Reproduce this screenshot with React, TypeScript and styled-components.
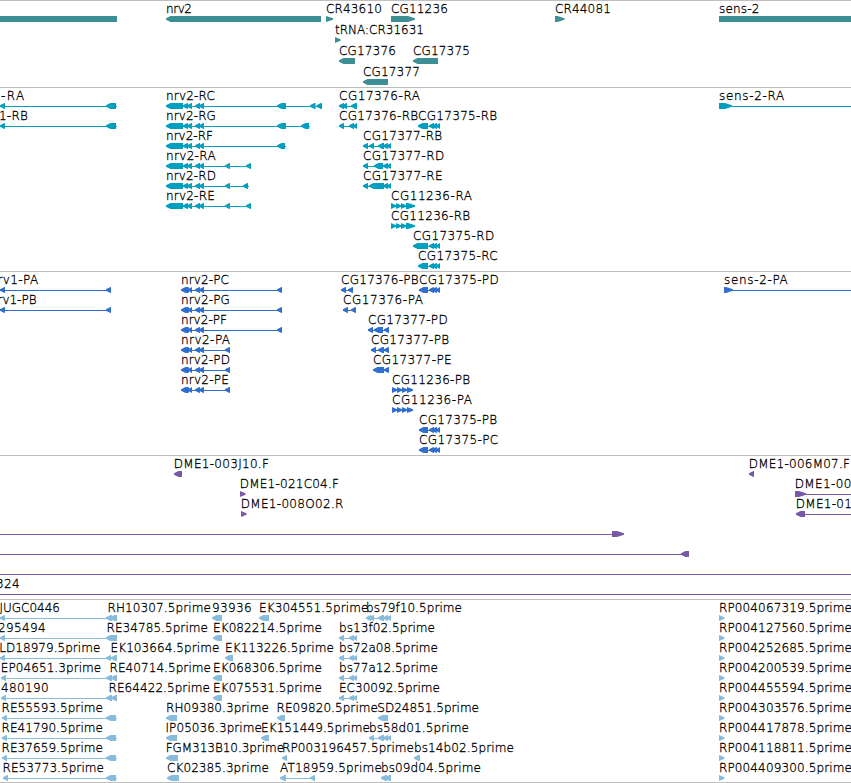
import React from 'react'
import styled, { createGlobalStyle } from 'styled-components'

type Span = [number, number]

type Feature = {
  name?: string
  x?: number
  width?: number
  dir?: 'left' | 'right' | 'none'
  line?: Span
  exons?: Span[]
}

type TrackData = {
  id: string
  color: string
  height: number
  rowHeight: number
  rows: Feature[][]
}

const FONT = '200 12px "DejaVu Sans Light", "DejaVu Sans", sans-serif'

const left = (name: string, x: number, width: number, exons: Span[], line?: Span): Feature => ({
  name, x, width, exons, line, dir: 'left',
})

const right = (name: string, x: number, width: number, exons: Span[], line?: Span): Feature => ({
  name, x, width, exons, line, dir: 'right',
})

const nrv2Tail: Span[] = [[166, 183], [183, 188], [187, 192], [195, 200], [199, 204]]
const nrv2Cds: Span[] = [[181, 188], [185, 189], [188, 192], [195, 200], [199, 204]]
const cg17375Head: Span[] = [[429, 434], [432, 437], [436, 440]]
const cg11236Rna: Span[] = [[391, 396], [396, 401], [401, 406], [406, 415]]
const cg11236Cds: Span[] = [[392, 397], [397, 402], [402, 407], [407, 413]]
const bsTail: Span[] = [[339, 344], [349, 354], [353, 357]]

const genes: TrackData = {
  id: 'genes',
  color: '#3e8f94',
  height: 87,
  rowHeight: 21,
  rows: [
    [
      { dir: 'none', exons: [[-10, 117]] },
      left('nrv2', 166, 25.5, [[166, 321]]),
      right('CR43610', 326, 56, [[326, 333]]),
      right('CG11236', 391, 57, [[391, 415]]),
      right('CR44081', 555, 56, [[555, 564.5]]),
      { name: 'sens-2', x: 719, width: 40.5, dir: 'none', exons: [[719, 861]] },
    ],
    [right('tRNA:CR31631', 335, 89, [[335, 340.5]])],
    [
      left('CG17376', 339, 57, [[339, 355]]),
      left('CG17375', 413, 57, [[413, 438]]),
    ],
    [left('CG17377', 363, 57, [[363, 388]])],
  ],
}

const transcripts: TrackData = {
  id: 'transcripts',
  color: '#009fbf',
  height: 184,
  rowHeight: 20,
  rows: [
    [
      left('-RA', 1, 24.5, [[0, 5], [106, 116]], [0, 117]),
      left('nrv2-RC', 166, 49, [...nrv2Tail, [277, 286], [310, 315.5], [316.5, 322]], [166, 322]),
      left('CG17376-RA', 339, 81.5, [[339, 344], [342, 347], [351, 357]], [339, 357]),
      right('sens-2-RA', 719, 66, [[719, 732]], [719, 851]),
    ],
    [
      left('1-RB', -1, 29, [[0, 5], [106, 116]], [0, 117]),
      left('nrv2-RG', 166, 50, [...nrv2Tail, [277, 286], [301, 309]], [166, 310]),
      left('CG17376-RB', 339, 79.5, [[339, 344], [349, 354], [353, 357]], [339, 357]),
      left('CG17375-RB', 418, 79.5, [[418, 428], ...cg17375Head], [418, 440]),
    ],
    [
      left('nrv2-RF', 166, 47, [...nrv2Tail, [277, 285]], [166, 286]),
      left('CG17377-RB', 363, 79.5, [[363, 368], [369, 374], [378, 384], [383, 388], [387, 391]], [363, 391]),
    ],
    [
      left('nrv2-RA', 166, 50, [...nrv2Tail, [225, 230], [246, 251]], [166, 251]),
      left('CG17377-RD', 363, 81.5, [[363, 368], [374, 383], [383, 388], [387, 391]], [363, 391]),
    ],
    [
      left('nrv2-RD', 166, 50, [...nrv2Tail, [225, 230], [243, 248]], [166, 249]),
      left('CG17377-RE', 363, 80, [[363, 368], [369, 384], [383, 388], [387, 391]], [363, 391]),
    ],
    [
      left('nrv2-RE', 166, 49, [...nrv2Tail, [225, 230], [246, 251]], [166, 251]),
      right('CG11236-RA', 391, 81.5, cg11236Rna, [391, 415]),
    ],
    [right('CG11236-RB', 391, 79.5, cg11236Rna, [391, 415])],
    [left('CG17375-RD', 413, 81.5, [[413, 428], ...cg17375Head], [413, 440])],
    [left('CG17375-RC', 418, 80, [[418, 428], ...cg17375Head], [418, 440])],
  ],
}

const proteins: TrackData = {
  id: 'proteins',
  color: '#306fce',
  height: 184,
  rowHeight: 20,
  rows: [
    [
      left('rv1-PA', -2.5, 41, [[0, 5], [106, 111]], [0, 111]),
      left('nrv2-PC', 181, 48, [...nrv2Cds, [277, 282]], [181, 282]),
      left('CG17376-PB', 341, 78, [[341, 346], [348, 353]], [341, 353]),
      left('CG17375-PD', 419, 80, [[419, 428], ...cg17375Head], [419, 440]),
      right('sens-2-PA', 724, 64.5, [[724, 733]], [724, 851]),
    ],
    [
      left('rv1-PB', -2.5, 39, [[0, 5], [106, 111]], [0, 111]),
      left('nrv2-PG', 181, 49, [...nrv2Cds, [277, 282]], [181, 282]),
      left('CG17376-PA', 343, 80.5, [[343, 348], [351, 356]], [343, 356]),
    ],
    [
      left('nrv2-PF', 181, 46, [...nrv2Cds, [277, 282]], [181, 282]),
      left('CG17377-PD', 368, 80, [[368, 373], [374, 383], [384, 389]], [368, 389]),
    ],
    [
      left('nrv2-PA', 181, 49.5, [...nrv2Cds, [225, 230]], [181, 230]),
      left('CG17377-PB', 371, 78.5, [[371, 376], [378, 384], [384, 389]], [371, 389]),
    ],
    [
      left('nrv2-PD', 181, 49, [...nrv2Cds, [225, 230]], [181, 230]),
      left('CG17377-PE', 373, 79, [[373, 384], [384, 389]], [373, 389]),
    ],
    [
      left('nrv2-PE', 181, 48, [...nrv2Cds, [225, 230]], [181, 230]),
      right('CG11236-PB', 392, 78.5, cg11236Cds, [392, 413]),
    ],
    [right('CG11236-PA', 392, 80.5, cg11236Cds, [392, 413])],
    [left('CG17375-PB', 419, 78.5, [[419, 428], ...cg17375Head], [419, 440])],
    [left('CG17375-PC', 419, 79.5, [[419, 428], ...cg17375Head], [419, 440])],
  ],
}

const clones: TrackData = {
  id: 'clones',
  color: '#7759a8',
  height: 144,
  rowHeight: 20,
  rows: [
    [
      left('DME1-003J10.F', 173.7, 95.5, [[174, 182]]),
      left('DME1-006M07.F', 748.7, 101.5, [[749, 754]]),
    ],
    [
      right('DME1-021C04.F', 239.7, 99.5, [[240, 245.5]]),
      right('DME1-00', 794.7, 57, [[795, 806]], [795, 851]),
    ],
    [
      right('DME1-008O02.R', 240.7, 103, [[241, 246.5]]),
      left('DME1-01', 795.7, 56.5, [[796, 805]], [796, 851]),
    ],
    [{ dir: 'right', exons: [[612, 624]], line: [0, 620] }],
    [{ dir: 'left', exons: [[681, 689]], line: [0, 685] }],
    [{ line: [0, 851] }],
    [{ name: '324', x: -4, width: 24, line: [0, 851] }],
  ],
}

const ests: TrackData = {
  id: 'ests',
  color: '#88bcdc',
  height: 183,
  rowHeight: 20,
  rows: [
    [
      left('JUGC0446', -0.5, 60.5, [[0, 5], [106, 112], [110, 117]], [0, 117]),
      { name: 'RH10307.5prime', x: 107.5, width: 103.5 },
      left('93936', 212, 40, [[212, 222]]),
      left('EK304551.5prime', 259, 109.5, [[259, 269]]),
      left('bs79f10.5prime', 366, 96, [[366, 371], [369, 374], [378, 384], [383, 388], [387, 391]], [366, 391]),
      right('RP004067319.5prime', 719, 133, [[719, 724.5]]),
    ],
    [
      left('295494', -2, 48, [[0, 5], [106, 112], [108, 117]], [0, 117]),
      { name: 'RE34785.5prime', x: 106.5, width: 101.5 },
      left('EK082214.5prime', 213, 109, [[213, 222]]),
      left('bs13f02.5prime', 339, 96, bsTail, [339, 357]),
      right('RP004127560.5prime', 719, 133, [[719, 724.5]]),
    ],
    [
      left('LD18979.5prime', -0.7, 101, [[0, 5], [106, 111], [111, 117]], [0, 117]),
      { name: 'EK103664.5prime', x: 110.5, width: 109 },
      left('EK113226.5prime', 225, 109, [[225, 233]]),
      left('bs72a08.5prime', 339, 99, bsTail, [339, 357]),
      right('RP004252685.5prime', 719, 133, [[719, 724.5]]),
    ],
    [
      left('EP04651.3prime', 0.8, 100.5, [[1, 6], [106, 112], [111, 117]], [1, 117]),
      { name: 'RE40714.5prime', x: 109.5, width: 101.5 },
      left('EK068306.5prime', 213, 109, [[213, 222]]),
      left('bs77a12.5prime', 339, 99, bsTail, [339, 357]),
      right('RP004200539.5prime', 719, 133, [[719, 724.5]]),
    ],
    [
      left('480190', 1, 48, [[1, 6], [106, 112], [111, 117]], [1, 117]),
      { name: 'RE64422.5prime', x: 108.5, width: 101.5 },
      left('EK075531.5prime', 213, 109, [[213, 222]]),
      left('EC30092.5prime', 339, 101, bsTail, [339, 357]),
      right('RP004455594.5prime', 719, 133, [[719, 724.5]]),
    ],
    [
      left('RE55593.5prime', 1.5, 101.5, [[2, 7], [106, 116]], [2, 117]),
      left('RH09380.3prime', 166, 103, [[166, 177]]),
      left('RE09820.5prime', 276.5, 101.5, [[277, 285]]),
      left('SD24851.5prime', 377.3, 101.7, [[378, 388]]),
      right('RP004303576.5prime', 719, 133, [[719, 724.5]]),
    ],
    [
      left('RE41790.5prime', 1.5, 101.5, [[2, 7], [106, 116]], [2, 117]),
      left('IP05036.3prime', 165.5, 96.5, [[166, 177]]),
      left('EK151449.5prime', 261, 109, [[261, 269]]),
      left('bs58d01.5prime', 369, 100, [[369, 374], [378, 384], [383, 388], [387, 391]], [369, 391]),
      right('RP004417878.5prime', 719, 133, [[719, 724.5]]),
    ],
    [
      left('RE37659.5prime', 1.5, 101.5, [[2, 7], [106, 116]], [2, 117]),
      left('FGM313B10.3prime', 165.7, 118.3, [[166, 178]]),
      left('RP003196457.5prime', 282, 132, [[282, 287]]),
      left('bs14b02.5prime', 414, 100, [[414, 420]]),
      right('RP004118811.5prime', 719, 133, [[719, 724.5]]),
    ],
    [
      left('RE53773.5prime', 2.5, 101.5, [[3, 8], [106, 116]], [3, 117]),
      left('CK02385.3prime', 167, 102, [[167, 179]]),
      left('AT18959.5prime', 280, 102, [[280, 286], [310, 315]], [280, 315]),
      left('bs09d04.5prime', 381, 100, [[381, 387], [385, 391]], [381, 391]),
      right('RP004409300.5prime', 719, 133, [[719, 724.5]]),
    ],
  ],
}

const tracks = [genes, transcripts, proteins, clones, ests]

const ruler = document.createElement('canvas').getContext('2d')

function spacing(name: string, width: number) {
  if (!ruler) return 0
  ruler.font = FONT
  return (width - ruler.measureText(name).width) / name.length
}

function exonPoints([a, b]: Span, dir: Feature['dir']) {
  const head = Math.min(4.5, b - a)
  if (dir === 'left') {
    return `${a},2.2 ${a + head},0 ${b},0 ${b},6 ${a + head},6 ${a},3.8`
  }
  if (dir === 'right') {
    const tip = Math.min(7, b - a)
    return `${a},0 ${b - tip},0 ${b},2.2 ${b},3.8 ${b - tip},6 ${a},6`
  }
  return `${a},0 ${b},0 ${b},6 ${a},6`
}

function Row({ features, height }: { features: Feature[]; height: number }) {
  return (
    <RowStyled $height={height}>
      <Labels>
        {features.filter(f => f.name).map(f => (
          <Label key={f.name} style={{ left: f.x, letterSpacing: spacing(f.name!, f.width!) }}>
            {f.name}
          </Label>
        ))}
      </Labels>
      <Glyphs width='851' height='6' viewBox='0 0 851 6'>
        {features.map((f, i) => (
          <g key={i}>
            {f.line && <rect x={f.line[0]} y='3' width={f.line[1] - f.line[0]} height='1' />}
            {f.exons?.map((exon, j) => <polygon key={j} points={exonPoints(exon, f.dir)} />)}
          </g>
        ))}
      </Glyphs>
    </RowStyled>
  )
}

export default function App() {
  return (
    <>
      <GlobalStyle />
      <Browser>
        {tracks.map(track => (
          <Track key={track.id} $height={track.height} $color={track.color}>
            {track.rows.map((features, i) => (
              <Row key={i} features={features} height={track.rowHeight} />
            ))}
          </Track>
        ))}
      </Browser>
    </>
  )
}

const GlobalStyle = createGlobalStyle`
  * {
    box-sizing: border-box;
  }

  body {
    margin: 0;
    background: #fff;
    overflow: hidden;
  }
`

const Browser = styled.main`
  display: flex;
  flex-direction: column;
  width: 851px;
  height: 783px;
  overflow: hidden;
  border-bottom: 1px solid #bebebe;
  font: ${FONT};
  color: #000;
`

const Track = styled.section<{ $height: number; $color: string }>`
  display: flex;
  flex: none;
  flex-direction: column;
  height: ${props => props.$height}px;
  border-top: 1px solid #bebebe;
  fill: ${props => props.$color};
`

const RowStyled = styled.div<{ $height: number }>`
  display: flex;
  flex: none;
  flex-direction: column;
  height: ${props => props.$height}px;
`

const Labels = styled.div`
  position: relative;
  flex: none;
  height: 15px;
`

const Label = styled.span`
  position: absolute;
  top: 0;
  line-height: 17px;
  white-space: pre;
  -webkit-text-stroke: 0.3px #000;
`

const Glyphs = styled.svg`
  display: block;
  flex: none;
`
